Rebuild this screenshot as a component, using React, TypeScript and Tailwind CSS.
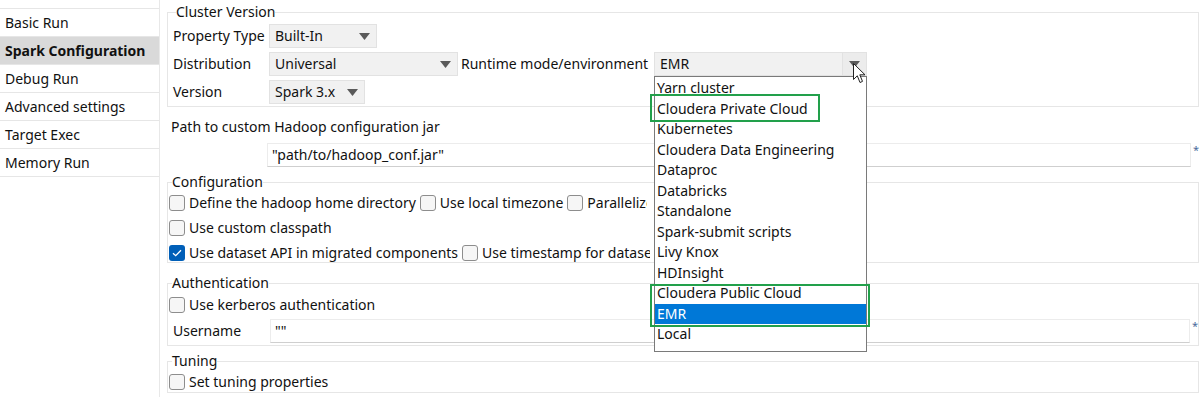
import type { ReactNode } from 'react';

const font = { fontFamily: '"Noto Sans", "Open Sans", sans-serif' };

const sideItems = ['Basic Run', 'Spark Configuration', 'Debug Run', 'Advanced settings', 'Target Exec', 'Memory Run'];

const runtimeOptions = [
  'Yarn cluster',
  'Cloudera Private Cloud',
  'Kubernetes',
  'Cloudera Data Engineering',
  'Dataproc',
  'Databricks',
  'Standalone',
  'Spark-submit scripts',
  'Livy Knox',
  'HDInsight',
  'Cloudera Public Cloud',
  'EMR',
  'Local',
];

function Arrow() {
  return (
    <svg width="11" height="7" viewBox="0 0 11 7" className="shrink-0">
      <path d="M0 0 L11 0 L5.5 7 Z" fill="#5a5a5a" />
    </svg>
  );
}

function Combo({ value, width, split }: { value: string; width: string; split?: boolean }) {
  return (
    <div className={`flex h-[24px] items-center border border-[#e2e2e2] bg-[#f1f1f1] ${width}`}>
      <span className="flex-1 pl-[5px] leading-[16px]">{value}</span>
      <div className={`flex h-full w-[24px] items-center justify-center ${split ? 'border-l border-[#e2e2e2] bg-[#ececec]' : ''}`}>
        <Arrow />
      </div>
    </div>
  );
}

function Checkbox({ checked }: { checked?: boolean }) {
  if (checked) {
    return (
      <span className="flex h-[16px] w-[16px] shrink-0 items-center justify-center rounded-[3px] bg-[#005fb8]">
        <svg width="10" height="8" viewBox="0 0 10 8">
          <path d="M1 4.2 L3.7 6.7 L9 1.2" stroke="white" strokeWidth="1.3" fill="none" />
        </svg>
      </span>
    );
  }
  return <span className="h-[16px] w-[16px] shrink-0 rounded-[3px] border border-[#8d8d8d] bg-[#f6f6f6]" />;
}

function Check({ label, checked, clip }: { label: string; checked?: boolean; clip?: string }) {
  return (
    <div className="flex h-[16px] items-center gap-[4px] whitespace-nowrap">
      <Checkbox checked={checked} />
      <span className={clip ? `overflow-hidden leading-[20px] ${clip}` : 'leading-[16px]'}>{label}</span>
    </div>
  );
}

function Group({ title, children, className }: { title: string; children: ReactNode; className?: string }) {
  return (
    <fieldset className={`border border-[#e6e6e6] ${className ?? ''}`}>
      <legend className="ml-[3px] leading-[16px]">{title}</legend>
      {children}
    </fieldset>
  );
}

function TextField({ value }: { value: string }) {
  return (
    <div className="flex items-start">
      <div className="flex h-[24px] flex-1 items-center border border-[#ececec] border-b-[#cfcfcf] bg-white pl-[4px] leading-[16px]">
        {value}
      </div>
      <span className="w-[8px] pl-[2px] text-[11px] leading-[14px] text-[#4a6a9a]">*</span>
    </div>
  );
}

export default function App() {
  return (
    <div className="flex h-[397px] w-[1200px] overflow-hidden bg-white text-[14px] text-[#111]" style={font}>
      <aside className="w-[160px] shrink-0 border-r border-[#e8e8e8] pt-[8px]">
        {sideItems.map((item) => (
          <div
            key={item}
            className={`flex h-[28px] items-center border-t border-[#e6e6e6] pl-[5px] text-[14px] ${
              item === 'Spark Configuration' ? 'bg-[#d9d9d9] font-bold' : ''
            }`}
          >
            {item}
          </div>
        ))}
        <div className="border-t border-[#e6e6e6]" />
      </aside>

      <main className="flex flex-1 flex-col pl-[7px] pr-[1px] pt-[4px]">
        <Group title="Cluster Version" className="px-[5px] pb-[2px]">
          <div className="flex flex-col gap-[4px] pt-[4px]">
            <div className="flex items-center">
              <span className="w-[96px] leading-[16px]">Property Type</span>
              <Combo value="Built-In" width="w-[108px]" />
            </div>
            <div className="flex items-center">
              <span className="w-[96px] leading-[16px]">Distribution</span>
              <Combo value="Universal" width="w-[189px]" />
              <span className="ml-[3px] w-[193px] leading-[16px]">Runtime mode/environment</span>
              <div className="relative">
                <Combo value="EMR" width="w-[213px]" split />
                <div className="absolute left-0 top-[24px] z-10 w-[213px] border border-[#7a7a7a] bg-white pb-[6px] pt-[1px]">
                  {runtimeOptions.map((opt) => (
                    <div
                      key={opt}
                      className={`flex h-[20.5px] items-center pl-[2px] leading-[16px] ${
                        opt === 'EMR' ? 'bg-[#0078d7] text-white' : ''
                      }`}
                    >
                      {opt}
                    </div>
                  ))}
                  <div className="absolute left-[-5px] top-[17px] h-[28px] w-[170px] border-2 border-[#22a04b]" />
                  <div className="absolute left-[-5px] top-[207px] h-[43px] w-[220px] border-2 border-[#22a04b]" />
                </div>
                <svg className="absolute left-[199px] top-[11px] z-20" width="13" height="21" viewBox="0 0 13 21">
                  <path d="M0.5 0.5 L0.5 16.5 L4.3 12.8 L7 19.5 L9.5 18.4 L6.8 11.8 L12 11.8 Z" fill="white" stroke="#222" strokeWidth="1" />
                </svg>
              </div>
            </div>
            <div className="flex items-center">
              <span className="w-[96px] leading-[16px]">Version</span>
              <Combo value="Spark 3.x" width="w-[96px]" />
            </div>
          </div>
        </Group>

        <div className="mt-[12px] pl-[4px] leading-[16px]">Path to custom Hadoop configuration jar</div>
        <div className="mt-[8px] pl-[100px]">
          <TextField value={'"path/to/hadoop_conf.jar"'} />
        </div>

        <Group title="Configuration" className="mt-[7px] pb-[1px] pl-[1px]">
          <div className="flex flex-col gap-[9px] pt-[5px]">
            <div className="flex items-center gap-[4px]">
              <Check label="Define the hadoop home directory" />
              <Check label="Use local timezone" />
              <Check label="Parallelize output files writing" clip="max-w-[60px]" />
            </div>
            <Check label="Use custom classpath" />
            <div className="flex items-center gap-[4px]">
              <Check label="Use dataset API in migrated components" checked />
              <Check label="Use timestamp for dataset components" clip="max-w-[168px]" />
            </div>
          </div>
        </Group>

        <Group title="Authentication" className="mt-[12px] pb-[2px] pl-[1px]">
          <div className="pt-[6px]">
            <Check label="Use kerberos authentication" />
          </div>
          <div className="mt-[6px] flex items-center">
            <span className="w-[101px] pl-[4px] leading-[16px]">Username</span>
            <div className="flex-1">
              <TextField value={'""'} />
            </div>
          </div>
        </Group>

        <Group title="Tuning" className="mt-[7px] pb-[2px] pl-[1px]">
          <div className="pt-[5px]">
            <Check label="Set tuning properties" />
          </div>
        </Group>
      </main>
    </div>
  );
}
